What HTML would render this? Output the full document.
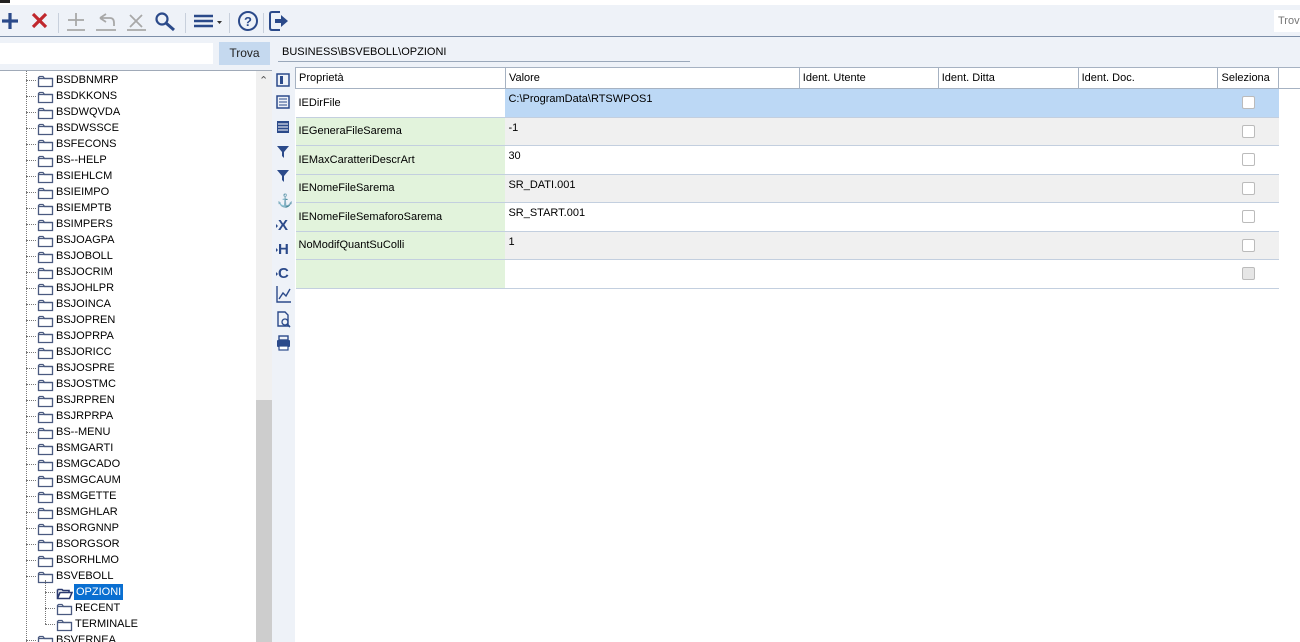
<!DOCTYPE html>
<html><head><meta charset="utf-8"><style>
*{margin:0;padding:0;box-sizing:border-box}
body{width:1300px;height:642px;overflow:hidden;background:#eef2f8;font-family:"Liberation Sans",Tahoma,sans-serif;font-size:11px;color:#000;position:relative}
.abs{position:absolute}
#top{left:0;top:0;width:1300px;height:5px;background:#fff}
#tb{left:0;top:5px;width:1300px;height:32px;background:#eef2f8;border-bottom:1px solid #7d8fa8}
.sep{position:absolute;top:8px;width:1px;height:20px;background:#c8d0dc}
#search{left:0;top:43px;width:213px;height:21px;background:#fff}
#trova{left:219px;top:42px;width:51px;height:23px;background:#c5d9ef;text-align:center;line-height:23px;font-size:12px;color:#222}
#path{left:282px;top:46px;font-size:11px}
#pathline{left:278px;top:61px;width:412px;height:1px;background:#9aa8ba}
#trova2{left:1274px;top:10px;width:26px;height:22px;background:#fff;color:#777;font-size:11px;line-height:22px;padding-left:4px;overflow:hidden}
#tree{left:0;top:70px;width:272px;height:572px;background:#fff;border-top:1px solid #a0aab8;border-right:1px solid #a0aab8;overflow:hidden}
.it{position:absolute;height:16px;line-height:16px;font-size:11px;white-space:nowrap}
.hl{position:absolute;height:0;border-top:1px dotted #777}
.vl{position:absolute;width:0;border-left:1px dotted #777}
#sb{left:256px;top:71px;width:16px;height:571px;background:#f0f0f0}
#thumb{left:256px;top:400px;width:16px;height:242px;background:#cdcdcd}
#icons{left:273px;top:70px;width:21px;height:572px;background:#eef2f8}
#grid{left:295px;top:67px;width:1005px;height:575px;background:#fff}
table{border-collapse:collapse;position:absolute;left:295px;top:67px}
td{height:29px;border-bottom:1px solid #c3cfdf;vertical-align:top;font-size:11px;padding:0 3px}
th{height:21px;border:1px solid #a6b2c2;font-weight:normal;text-align:left;padding:2px 3px;font-size:11px;background:#fff}
.p{background:#e2f3dc;vertical-align:middle}
.g{background:#f0f0f0}
.s{background:#bcd8f5}
td.v{padding-top:4px}
.cb{width:13px;height:13px;border:1px solid #bbb;background:#fff;border-radius:2px;margin:7px auto 0}
</style></head><body>
<div class="abs" id="top"></div>
<div class="abs" style="left:0;top:0;width:10px;height:3px;background:#222"></div>
<div class="abs" id="tb">
<svg width="260" height="32" style="position:absolute;left:0;top:0">
<g stroke="#2b4a8a" stroke-width="3.2"><line x1="2" y1="16" x2="18" y2="16"/><line x1="10" y1="8" x2="10" y2="24"/></g>
<g stroke="#c0272d" stroke-width="3.2"><line x1="33" y1="9" x2="46" y2="22"/><line x1="46" y1="9" x2="33" y2="22"/></g>
<g stroke="#a8a8a8" stroke-width="1.8" fill="none"><line x1="68" y1="15" x2="84" y2="15"/><line x1="76" y1="8" x2="76" y2="21"/><line x1="67" y1="25" x2="85" y2="25"/>
<path d="M100 13 L106 9 M100 13 L106 17 M100 13 H110 Q114 13 114 18 V21"/><line x1="96" y1="25" x2="116" y2="25"/>
<line x1="130" y1="10" x2="142" y2="22"/><line x1="142" y1="10" x2="130" y2="22"/><line x1="127" y1="25" x2="146" y2="25"/></g>
<circle cx="162" cy="14" r="5.5" stroke="#2b4a8a" stroke-width="2.2" fill="none"/><line x1="166" y1="18" x2="174" y2="25" stroke="#2b4a8a" stroke-width="3"/>
<g stroke="#2b4a8a" stroke-width="2.6"><line x1="194" y1="11" x2="213" y2="11"/><line x1="194" y1="16" x2="213" y2="16"/><line x1="194" y1="21" x2="213" y2="21"/></g>
<path d="M217 16 h5 l-2.5 3z" fill="#333"/>
<circle cx="248" cy="16" r="9" stroke="#2b4a8a" stroke-width="2" fill="none"/>
<text x="244" y="21" font-size="13" font-weight="bold" fill="#2b4a8a" font-family="Liberation Sans">?</text>
</svg>
<svg width="22" height="24" style="position:absolute;left:268px;top:4px"><path d="M12 3 H4 Q2 3 2 5 V19 Q2 21 4 21 H12" stroke="#2b4a8a" stroke-width="2" fill="none"/><path d="M7 10 H13 V6 L20 12 L13 18 V14 H7z" fill="#2b4a8a"/></svg>
<div class="sep" style="left:58px"></div><div class="sep" style="left:185px"></div><div class="sep" style="left:229px"></div><div class="sep" style="left:263px"></div>
</div>
<div class="abs" id="trova2">Trova</div>
<div class="abs" id="search"></div>
<div class="abs" id="trova">Trova</div>
<div class="abs" id="path">BUSINESS\BSVEBOLL\OPZIONI</div>
<div class="abs" id="pathline"></div>
<div class="abs" id="tree"></div>
<div id="treeitems"></div>
<div class="abs" id="sb"></div>
<div class="abs" id="thumb"></div>
<div class="abs" style="left:259px;top:74px;font-size:11px;color:#555">&#8963;</div>
<div class="abs" id="icons">
<svg width="21" height="290" style="position:absolute;left:0;top:0" fill="#2b4a8a" stroke="#2b4a8a">
<rect x="4" y="4" width="12" height="12" fill="none" stroke-width="1.5"/><rect x="7" y="6" width="3" height="8" stroke="none"/>
<rect x="4" y="26" width="12" height="12" fill="none" stroke-width="1.5"/><g stroke-width="1"><line x1="6" y1="29" x2="14" y2="29"/><line x1="6" y1="32" x2="14" y2="32"/><line x1="6" y1="35" x2="14" y2="35"/></g>
<rect x="4" y="51" width="12" height="12" stroke="none"/><g stroke="#fff" stroke-width="1"><line x1="5" y1="54" x2="15" y2="54"/><line x1="5" y1="57" x2="15" y2="57"/><line x1="5" y1="60" x2="15" y2="60"/></g>
<path d="M4 76 H16 L11 82 V88 L9 86 V82z" stroke="none"/><path d="M4 100 H16 L11 106 V112 L9 110 V106z" stroke="none"/>
<text x="4" y="135" font-size="13" stroke="none" font-family="Liberation Sans">⚓</text>
<text x="5" y="160" font-size="15" font-weight="bold" stroke="none" font-family="Liberation Sans">X</text>
<text x="5" y="184" font-size="15" font-weight="bold" stroke="none" font-family="Liberation Sans">H</text>
<text x="5" y="208" font-size="15" font-weight="bold" stroke="none" font-family="Liberation Sans">C</text>
<path d="M3 154 l2 2 l-2 2z M3 178 l2 2 l-2 2z M3 202 l2 2 l-2 2z" stroke="none"/>
<path d="M4 216 V232 H18 M6 229 L10 223 L13 226 L17 219" fill="none" stroke-width="1.4"/>
<path d="M5 242 H12 L15 245 V256 H5z" fill="none" stroke-width="1.4"/><circle cx="12" cy="252" r="3" fill="none" stroke-width="1.3"/><line x1="14" y1="254" x2="17" y2="257" stroke-width="1.6"/>
<rect x="6" y="266" width="9" height="4" fill="none" stroke-width="1.4"/><rect x="4" y="270" width="13" height="7" rx="1" stroke="none"/><rect x="6" y="276" width="9" height="4" fill="#fff" stroke-width="1.2"/>
</svg>
</div>
<div class="abs" id="grid"></div>
<table>
<tr><th style="width:210px">Proprietà</th><th style="width:294px">Valore</th><th style="width:139px">Ident. Utente</th><th style="width:140px">Ident. Ditta</th><th style="width:140px">Ident. Doc.</th><th style="width:61px">Seleziona</th><th style="width:21px;border-right:none"></th></tr>
<tr><td style="vertical-align:middle;background:#fff">IEDirFile</td><td class="s v">C:\ProgramData\RTSWPOS1</td><td class="s"></td><td class="s"></td><td class="s"></td><td class="s"><div class="cb"></div></td><td style="border:none"></td></tr>
<tr><td class="p">IEGeneraFileSarema</td><td class="g v">-1</td><td class="g"></td><td class="g"></td><td class="g"></td><td class="g"><div class="cb"></div></td><td style="border:none"></td></tr>
<tr><td class="p">IEMaxCaratteriDescrArt</td><td class="v">30</td><td></td><td></td><td></td><td><div class="cb"></div></td><td style="border:none"></td></tr>
<tr><td class="p">IENomeFileSarema</td><td class="g v">SR_DATI.001</td><td class="g"></td><td class="g"></td><td class="g"></td><td class="g"><div class="cb"></div></td><td style="border:none"></td></tr>
<tr><td class="p">IENomeFileSemaforoSarema</td><td class="v">SR_START.001</td><td></td><td></td><td></td><td><div class="cb"></div></td><td style="border:none"></td></tr>
<tr><td class="p">NoModifQuantSuColli</td><td class="g v">1</td><td class="g"></td><td class="g"></td><td class="g"></td><td class="g"><div class="cb"></div></td><td style="border:none"></td></tr>
<tr><td class="p"></td><td></td><td></td><td></td><td></td><td><div class="cb" style="background:#e6e6e6"></div></td><td style="border:none"></td></tr>
</table>
<script>
document.querySelectorAll("td").forEach(function(t){t.style.height="28.5px";});
var n=["BSDBNMRP","BSDKKONS","BSDWQVDA","BSDWSSCE","BSFECONS","BS--HELP","BSIEHLCM","BSIEIMPO","BSIEMPTB","BSIMPERS","BSJOAGPA","BSJOBOLL","BSJOCRIM","BSJOHLPR","BSJOINCA","BSJOPREN","BSJOPRPA","BSJORICC","BSJOSPRE","BSJOSTMC","BSJRPREN","BSJRPRPA","BS--MENU","BSMGARTI","BSMGCADO","BSMGCAUM","BSMGETTE","BSMGHLAR","BSORGNNP","BSORGSOR","BSORHLMO","BSVEBOLL"];
var h="";
h+='<div class="vl" style="left:26px;top:71px;height:571px"></div>';
var F='<path d="M1.5 3.5 V12.5 H15.5 V4.5 H7.5 L6 2.5 H2.5z" fill="#fff" stroke="#4a5a80" stroke-width="1.3"/><line x1="1.5" y1="4.5" x2="15.5" y2="4.5" stroke="#4a5a80" stroke-width="1.3"/>';
var FO='<path d="M1.5 3.5 V12.5 H13.5 L16 6.5 H4 L1.5 12.5" fill="#fff" stroke="#2b3a70" stroke-width="1.6"/><path d="M1.5 3.5 H6 L7 4.5 H13 V6.5" fill="none" stroke="#2b3a70" stroke-width="1.6"/>';
function item(x,y,t,sel){
 h+='<div class="hl" style="left:'+(x-11)+'px;top:'+(y+8)+'px;width:10px"></div>';
 h+='<svg width="17" height="14" style="position:absolute;left:'+x+'px;top:'+(y+2)+'px">'+(sel?FO:F)+'</svg>';
 h+='<div class="it" style="left:'+(x+19)+'px;top:'+y+'px;'+(sel?'background:#0a6fd1;color:#fff;padding:0 2px;left:'+(x+18)+'px':'')+'">'+t+'</div>';
}
for(var i=0;i<n.length;i++)item(37,72+i*16,n[i]);
var y0=72+32*16;
h+='<div class="vl" style="left:45px;top:'+(y0-4)+'px;height:44px"></div>';
item(56,y0,"OPZIONI",1);item(56,y0+16,"RECENT");item(56,y0+32,"TERMINALE");
item(37,y0+48,"BSVERNEA");
document.getElementById("treeitems").innerHTML='<div class="abs" style="left:0;top:0;width:256px;height:642px;overflow:hidden">'+h+'</div>';
</script>
</body></html>
